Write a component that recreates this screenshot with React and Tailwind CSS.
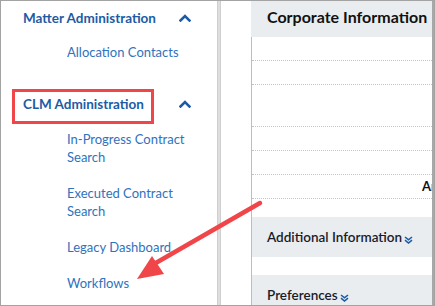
import React from "react";

const ChevronUp = () => (
  <svg width="12" height="8" viewBox="0 0 12 8" className="block">
    <polyline points="1.5,6.5 6,2 10.5,6.5" fill="none" stroke="#1d5ba4" strokeWidth="2.6" strokeLinecap="square" />
  </svg>
);

const DoubleDown = () => (
  <svg width="9" height="8" viewBox="0 0 9 8" className="inline-block">
    <polyline points="1,1 4.5,3.8 8,1" fill="none" stroke="#1d5ba4" strokeWidth="1.6" />
    <polyline points="1,4.2 4.5,7 8,4.2" fill="none" stroke="#1d5ba4" strokeWidth="1.6" />
  </svg>
);

function SubItem({ children }) {
  return <div className="text-[13px] leading-[18px] text-[#2f72be]">{children}</div>;
}

export default function App() {
  return (
    <div className="relative w-[435px] h-[306px] overflow-hidden bg-white border border-[#a3a3a3] flex" style={{ fontFamily: "Lato, 'Noto Sans', sans-serif" }}>
      {/* Sidebar */}
      <div className="w-[216px] shrink-0 flex flex-col">
        <div className="flex items-center justify-between pl-[22px] pr-[26px] pt-[8px] h-[26px]">
          <span className="text-[13.5px] font-bold text-[#1d5ba4] leading-[18px]">Matter Administration</span>
          <ChevronUp />
        </div>
        <div className="pl-[66px] mt-[16px]">
          <SubItem>Allocation Contacts</SubItem>
        </div>
        <div className="flex items-center justify-between pl-[22px] pr-[26px] mt-[34px] h-[18px]">
          <span className="text-[13.5px] font-bold text-[#1d5ba4] leading-[18px]">CLM Administration</span>
          <ChevronUp />
        </div>
        <div className="pl-[66px] mt-[17px] flex flex-col gap-[18px]">
          <SubItem>In-Progress Contract<br />Search</SubItem>
          <SubItem>Executed Contract<br />Search</SubItem>
          <SubItem>Legacy Dashboard</SubItem>
          <SubItem>Workflows</SubItem>
        </div>
      </div>

      {/* Splitter */}
      <div className="w-[4px] shrink-0 bg-[#dedede] border-x border-[#cfcfcf]" />
      <div className="w-[30px] shrink-0" />

      {/* Main panel */}
      <div className="flex-1 flex flex-col border-r-2 border-[#a8a8a8] min-w-0">
        <div className="h-[36px] shrink-0 bg-[#e9edf0] flex items-center pl-[16px] pb-[4px] whitespace-nowrap overflow-hidden">
          <span className="text-[16px] font-bold text-[#111]">Corporate Information</span>
        </div>
        <div className="flex-1 flex flex-col border-l border-[#bdbdbd]">
          <div className="h-[24px] border-b border-dotted border-[#c4c4c4]" />
          <div className="h-[24px] border-b border-dotted border-[#c4c4c4]" />
          <div className="h-[42px] border-b border-dotted border-[#c4c4c4]" />
          <div className="h-[24px] border-b border-dotted border-[#c4c4c4]" />
          <div className="h-[24px] border-b border-dotted border-[#c4c4c4]" />
          <div className="h-[24px] border-b border-dotted border-[#c4c4c4] flex items-center pl-[170px] whitespace-nowrap overflow-hidden">
            <span className="text-[13px] font-bold text-[#111]">Area</span>
          </div>
          <div className="h-[18px]" />
          <div className="h-[40px] bg-[#e9edf0] flex items-center pl-[15px] whitespace-nowrap">
            <span className="text-[13.5px] font-semibold text-[#1a1a2a]">Additional Information</span>
            <span className="ml-[2px] mt-[3px]"><DoubleDown /></span>
          </div>
          <div className="h-[18px]" />
          <div className="h-[40px] bg-[#e9edf0] flex items-center pl-[15px] whitespace-nowrap">
            <span className="text-[13.5px] font-semibold text-[#1a1a2a]">Preferences</span>
            <span className="ml-[2px] mt-[3px]"><DoubleDown /></span>
          </div>
        </div>
      </div>

      {/* Annotations */}
      <div className="absolute left-[11px] top-[88px] w-[142px] h-[35px] border-[3px] border-[#f04549] pointer-events-none" />
      <svg className="absolute left-0 top-0 pointer-events-none" width="435" height="306" viewBox="-1 -1 435 306">
        <line x1="258" y1="201" x2="152" y2="262" stroke="#f04549" strokeWidth="4.5" strokeLinecap="round" />
        <polygon points="135,277 150,254 162,272" fill="#f04549" />
      </svg>
    </div>
  );
}
